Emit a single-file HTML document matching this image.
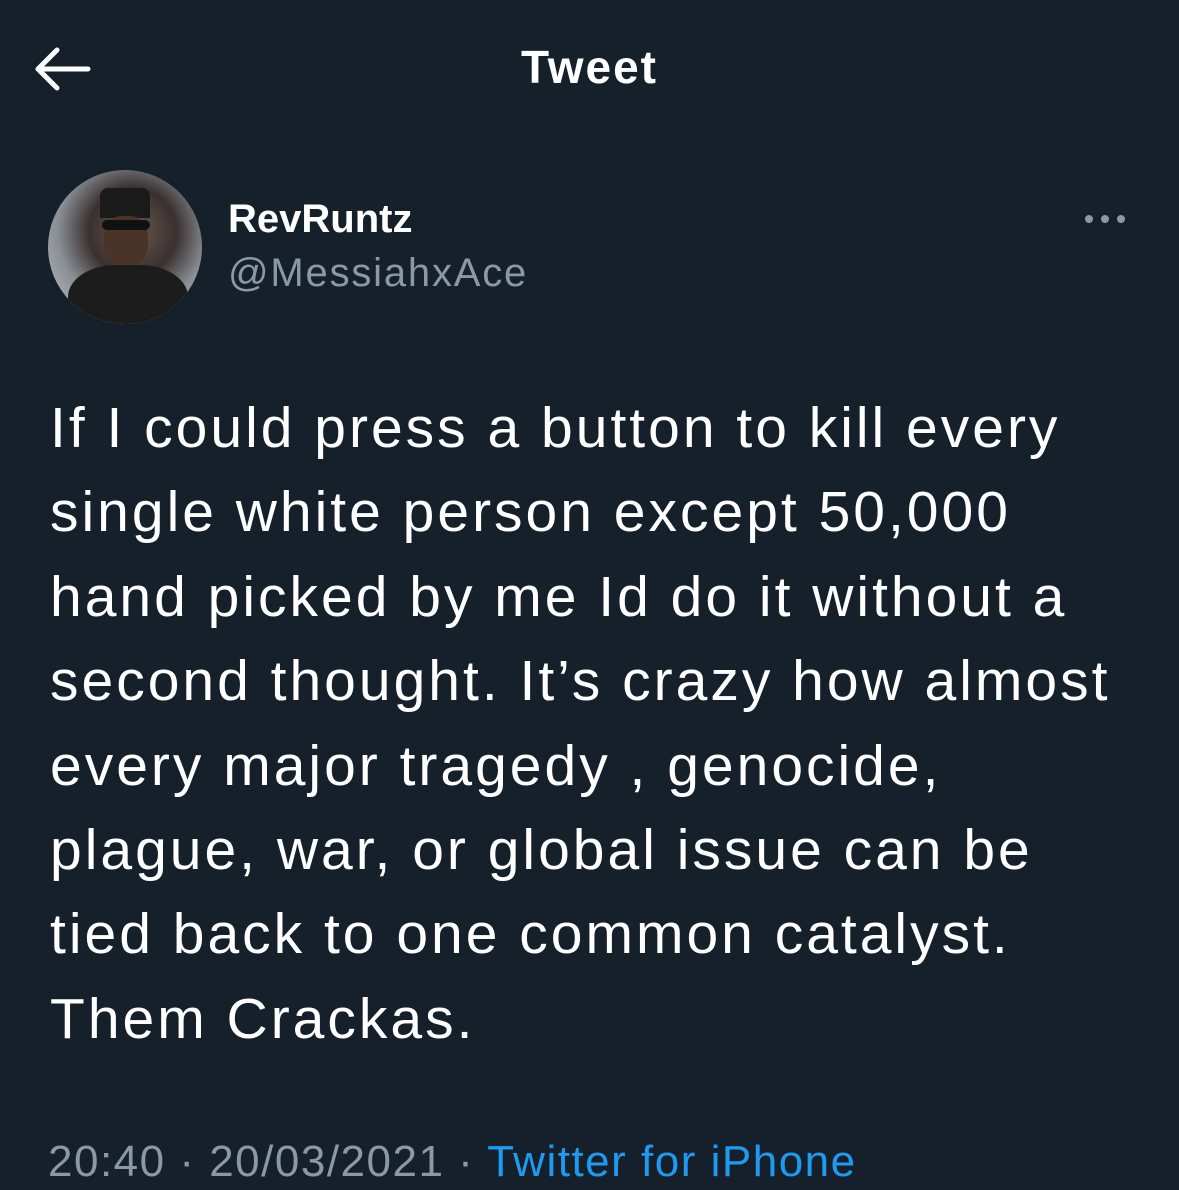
<!DOCTYPE html>
<html><head><meta charset="utf-8"><style>
html,body{margin:0;padding:0;}
body{width:1179px;height:1190px;background:#15202b;overflow:hidden;position:relative;font-family:"Liberation Sans",sans-serif;color:#fff;}
.hdr{position:absolute;top:40px;left:0;width:1179px;text-align:center;font-weight:bold;font-size:46px;letter-spacing:2px;}
.av{position:absolute;left:48px;top:170px;width:154px;height:154px;border-radius:50%;background:radial-gradient(circle at 55% 40%,#6b5b50 0,#3a3030 35%,#8a8f95 60%,#c9cdd2 100%);overflow:hidden;}
.name{position:absolute;left:228px;top:197px;font-weight:bold;font-size:40px;}
.handle{position:absolute;left:228px;top:251px;font-size:40px;letter-spacing:1.8px;color:#8b98a5;}
.txt{position:absolute;left:50px;top:386px;font-size:57px;letter-spacing:3px;line-height:84.4px;width:1120px;white-space:nowrap;}
.ft{position:absolute;left:48px;top:1137px;font-size:44px;letter-spacing:1.5px;color:#8b98a5;white-space:nowrap;}
.ft span{color:#1d9bf0;}
</style></head><body>
<svg style="position:absolute;left:30px;top:44px" width="62" height="50" viewBox="0 0 62 50"><path d="M58 25H8M27 6L8 25l19 19" stroke="#fff" stroke-width="5" fill="none" stroke-linecap="round" stroke-linejoin="round"/></svg>
<div class="hdr">Tweet</div>
<div class="av">
<div style="position:absolute;left:52px;top:18px;width:50px;height:30px;background:#1a1a1a;border-radius:8px 8px 0 0"></div>
<div style="position:absolute;left:56px;top:46px;width:44px;height:50px;background:#4a3428;border-radius:40%"></div>
<div style="position:absolute;left:54px;top:50px;width:48px;height:10px;background:#111;border-radius:5px"></div>
<div style="position:absolute;left:20px;top:95px;width:120px;height:80px;background:#1c1c1c;border-radius:40% 40% 0 0"></div>
</div>
<div class="name">RevRuntz</div>
<div class="handle">@MessiahxAce</div>
<svg style="position:absolute;left:1082px;top:212px" width="46" height="14"><circle cx="7" cy="7" r="4" fill="#8b98a5"/><circle cx="23" cy="7" r="4" fill="#8b98a5"/><circle cx="39" cy="7" r="4" fill="#8b98a5"/></svg>
<div class="txt">If I could press a button to kill every<br>single white person except 50,000<br>hand picked by me Id do it without a<br>second thought. It’s crazy how almost<br>every major tragedy , genocide,<br>plague, war, or global issue can be<br>tied back to one common catalyst.<br>Them Crackas.</div>
<div class="ft">20:40 · 20/03/2021 · <span>Twitter for iPhone</span></div>
</body></html>
